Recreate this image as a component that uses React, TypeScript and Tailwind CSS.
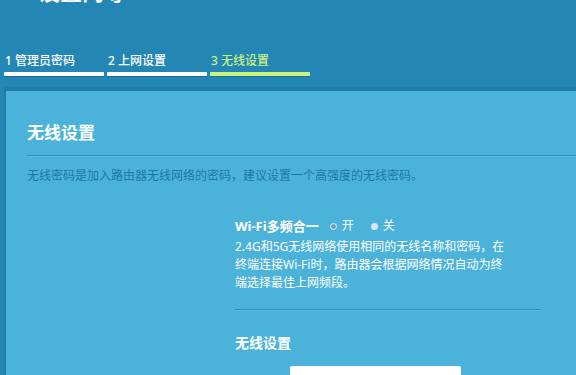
import React from 'react';

const steps = [
  { n: 1, label: '管理员密码', done: true },
  { n: 2, label: '上网设置', done: true },
  { n: 3, label: '无线设置', active: true },
];

export default function App() {
  return (
    <div
      className="w-[576px] h-[375px] overflow-hidden bg-[#2486b4] text-white"
      style={{ fontFamily: '"Noto Sans", "Noto Sans CJK SC", sans-serif' }}
    >
      <div className="h-[5px] overflow-hidden">
        <div className="-mt-[23px] pl-[6px] text-[22px] font-bold leading-[28px] text-white">TP 设置向导</div>
      </div>

      {/* wizard steps */}
      <div className="mt-[48px] flex pl-[4px]">
        {steps.map(s => (
          <div key={s.n} className="w-[103px] flex flex-col">
            <div
              className={
                s.active
                  ? 'pl-[1px] text-[12px] font-medium leading-[16px] text-[#c9f17e] whitespace-nowrap'
                  : 'pl-[1px] text-[12px] font-medium leading-[16px] text-white whitespace-nowrap'
              }
            >
              {s.n} {s.label}
            </div>
            <div
              className={
                s.active
                  ? 'mt-[3px] mr-[3px] h-[4px] rounded-[1px] bg-[#cdf37f] shadow-[0_1px_0_#1a6f98]'
                  : 'mt-[3px] mr-[3px] h-[4px] rounded-[1px] bg-white shadow-[0_1px_0_#1a6f98]'
              }
            />
          </div>
        ))}
      </div>

      {/* panel */}
      <div className="mt-[11px] ml-[4px] h-[300px] border-t-[4px] border-l-[2px] border-[#1f7dab] bg-[#4bb3da]">
        <div className="pt-[31px] pl-[21px]">
          <div className="text-[17px] font-bold leading-[22px] text-white">无线设置</div>
          <div className="mt-[11px] h-[2px] border-t border-[#2c8fbc] bg-[#5bbde0]" />
          <div className="mt-[10px] text-[12px] leading-[18px] text-[#1c79a7] whitespace-nowrap">
            无线密码是加入路由器无线网络的密码，建议设置一个高强度的无线密码。
          </div>
        </div>

        <div className="mt-[32px] ml-[229px] w-[305px]">
          <div className="flex items-center text-[13px] leading-[18px]">
            <span className="font-bold">Wi-Fi多频合一</span>
            <span className="ml-[11px] w-[7px] h-[7px] rounded-full border-[1.5px] border-[#e4eef3] bg-[#6f9fb6]" />
            <span className="ml-[5px] text-[12px]">开</span>
            <span className="ml-[17px] w-[7px] h-[7px] rounded-full bg-[#d9e6ec]" />
            <span className="ml-[5px] text-[12px]">关</span>
          </div>
          <div className="mt-[3px] text-[12px] leading-[18px] whitespace-nowrap">
            2.4G和5G无线网络使用相同的无线名称和密码，在
            <br />
            终端连接Wi-Fi时，路由器会根据网络情况自动为终
            <br />
            端选择最佳上网频段。
          </div>
          <div className="mt-[17px] h-[2px] border-t border-[#2c8fbc] bg-[#5bbde0]" />
          <div className="mt-[23px] text-[14px] font-bold leading-[18px]">无线设置</div>
          <div className="mt-[14px] ml-[55px] w-[171px] h-[24px] rounded-[2px] bg-white" />
        </div>
      </div>
    </div>
  );
}
